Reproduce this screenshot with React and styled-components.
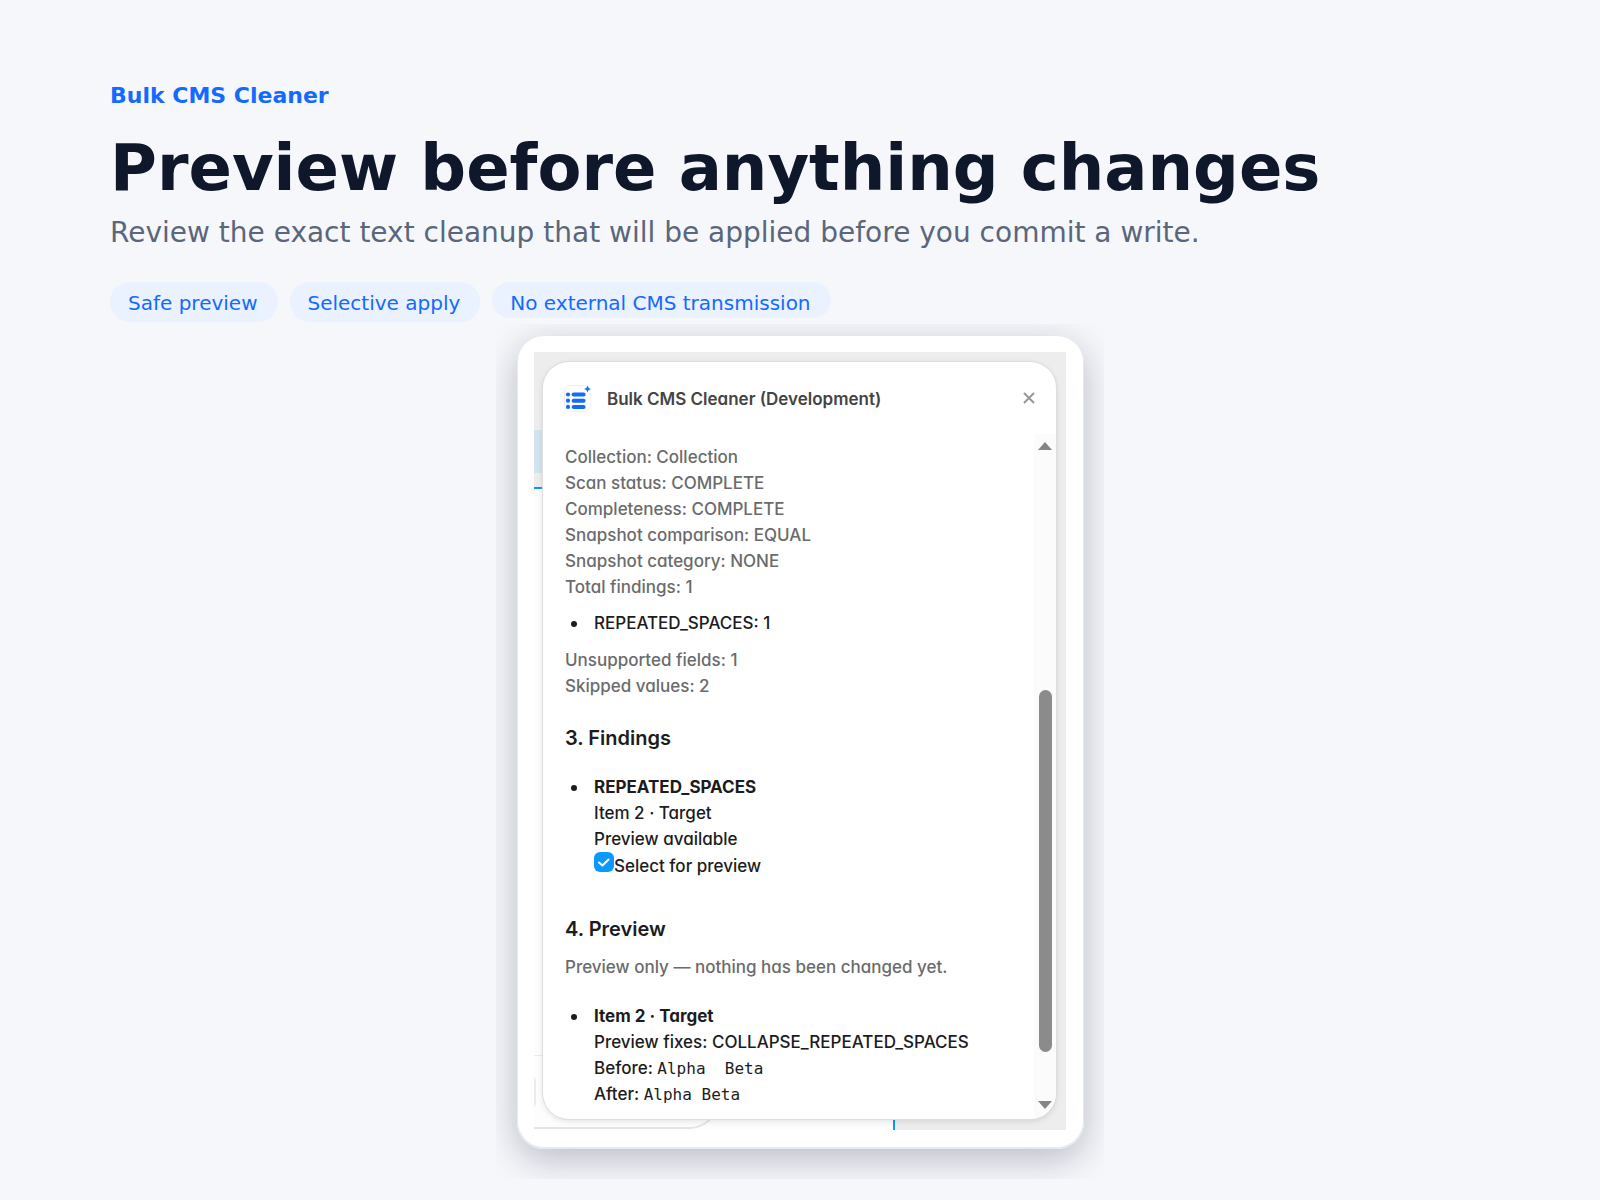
import styled, { createGlobalStyle } from 'styled-components';

const GlobalStyle = createGlobalStyle`
  * {
    box-sizing: border-box;
  }
  body {
    margin: 0;
    background: #f5f7fb;
    font-family: "DejaVu Sans", sans-serif;
  }
  h1, h2, p, ul {
    margin: 0;
    padding: 0;
  }
`;

const Page = styled.main`
  padding: 81px 110px 20px;
`;

const Brand = styled.p`
  font-weight: 700;
  font-size: 22px;
  line-height: 30px;
  color: #146aff;
`;

const Headline = styled.h1`
  margin-top: 19px;
  font-weight: 700;
  font-size: 64px;
  line-height: 76px;
  color: #0f172a;
`;

const Lead = styled.p`
  margin-top: 9px;
  font-size: 28px;
  line-height: 36px;
  color: #5b667a;
`;

const Tags = styled.ul`
  display: flex;
  flex-wrap: wrap;
  align-items: flex-start;
  gap: 12px;
  margin-top: 31px;
  list-style: none;
`;

const Tag = styled.li`
  height: ${({ $short }) => ($short ? '36px' : '40px')};
  padding: 0 20px 0 18px;
  border-radius: 20px;
  background: #eaf1ff;
  font-size: 20px;
  line-height: 42px;
  color: #146aff;
`;

const Stage = styled.div`
  width: 100%;
  max-width: 608px;
  margin: 2px auto 0;
  padding: 12px 20px 30px 21px;
  overflow: hidden;
`;

const Device = styled.div`
  padding: 16px 18px 19px 17px;
  border-radius: 27px;
  background: #fff;
  box-shadow: inset 0 -1px 0 1px #e4e9f5, 0 10px 36px rgba(15, 18, 32, 0.26);
`;

const Screen = styled.div`
  position: relative;
  padding: 10px 10px 11px 9px;
  overflow: hidden;
  background: #ededed;
`;

/* the editor that shows behind the plugin window */
const Canvas = styled.div`
  position: absolute;
  top: 135px;
  bottom: 0;
  left: 0;
  width: 361px;
  border-top: 2px solid #0a99ff;
  border-right: 2px solid #0a99ff;
  background: #fdfdfd;
`;

const Selection = styled.div`
  position: absolute;
  top: 78px;
  left: 0;
  width: 40px;
  height: 43px;
  background: #d0e4ee;
`;

const Toolbar = styled.div`
  position: absolute;
  bottom: 1px;
  left: -40px;
  width: 224px;
  height: 74px;
  border: 2px solid #e4e4e4;
  border-top: 1px solid #ebebeb;
  border-radius: 0 0 28px 0;
`;

const ToolbarButton = styled.div`
  position: absolute;
  bottom: 18px;
  left: 0;
  width: 40px;
  height: 34px;
  border-right: 2px solid #ececec;
  border-radius: 6px;
`;

const Plugin = styled.section`
  position: relative;
  border-radius: 26px;
  overflow: hidden;
  background: #fff;
  box-shadow: 0 0 0 1px #dedede, 0 2px 6px rgba(0, 0, 0, 0.12);
  font-family: Inter, sans-serif;
  font-feature-settings: "cv11";
  font-weight: 500;
  font-size: 17px;
  line-height: 26px;
  color: #1c1c1c;
`;

const PluginHeader = styled.header`
  display: flex;
  align-items: center;
  gap: 15px;
  height: 72px;
  padding: 1px 18px 0 21px;
`;

const PluginTitle = styled.h2`
  flex: 1;
  font-weight: 600;
  font-size: 17px;
  line-height: 26px;
  color: #444;
`;

const CloseButton = styled.button`
  display: flex;
  padding: 0;
  border: 0;
  background: none;
  color: #999;
  cursor: pointer;
`;

const PluginBody = styled.div`
  display: flex;
`;

const Content = styled.div`
  flex: 1;
  padding: 10px 20px 12px 22px;
`;

const Muted = styled.p`
  color: #6b6b6b;
`;

const Note = styled(Muted)`
  margin-top: 12px;
`;

const SectionTitle = styled.h2`
  margin-top: ${({ $gap }) => $gap}px;
  font-weight: 600;
  font-size: 20px;
  line-height: 26px;
`;

const Bullets = styled.ul`
  margin: ${({ $margin }) => $margin};
  list-style: none;
`;

const Bullet = styled.li`
  display: grid;
  grid-template-columns: 23px 1fr;
  padding-left: 6px;
  &::before {
    content: "";
    width: 6px;
    height: 6px;
    margin-top: 11px;
    border-radius: 50%;
    background: #1c1c1c;
  }
`;

const CheckLabel = styled.label`
  display: flex;
  align-items: flex-start;
  line-height: 28px;
  cursor: pointer;
`;

const CheckBox = styled.span`
  display: grid;
  width: 20px;
  height: 20px;
  input, svg {
    grid-area: 1 / 1;
  }
  svg {
    pointer-events: none;
  }
`;

const CheckInput = styled.input`
  appearance: none;
  width: 20px;
  height: 20px;
  margin: 0;
  border-radius: 6px;
  background: #d5d5d5;
  &:checked {
    background: #0a99ff;
  }
`;

const Value = styled.code`
  font-family: "DejaVu Sans Mono", monospace;
  font-weight: 400;
  font-size: 16px;
  line-height: 16px;
  white-space: pre;
`;

const ScrollTrack = styled.div`
  display: flex;
  flex-direction: column;
  align-items: center;
  width: 22px;
  padding: 8px 0 10px;
  background: #fbfbfb;
`;

const ScrollSpace = styled.div`
  flex: ${({ $size }) => $size};
`;

const ScrollThumb = styled.div`
  flex: 361;
  width: 13px;
  border-radius: 7px;
  background: #8b8b8b;
`;

const AppLogo = () => (
  <svg width="28" height="28" viewBox="0 0 28 28" aria-hidden="true">
    <rect x="0.5" y="0.5" width="26" height="26" rx="6" fill="#fff" stroke="#f0f0f2" />
    <g fill="#146aff">
      <circle cx="4" cy="9.5" r="2.1" />
      <circle cx="4" cy="15.7" r="2.1" />
      <circle cx="4" cy="21.9" r="2.1" />
      <rect x="7.6" y="7.5" width="14" height="4" rx="2" />
      <rect x="7.6" y="13.7" width="14" height="4" rx="2" />
      <rect x="7.6" y="19.9" width="14" height="4" rx="2" />
      <path d="M23.5 0.4 L24.6 2.9 L27 4 L24.6 5.1 L23.5 7.6 L22.4 5.1 L20 4 L22.4 2.9 Z" />
    </g>
  </svg>
);

const CloseIcon = () => (
  <svg width="18" height="18" viewBox="0 0 18 18" aria-hidden="true">
    <path d="M4 3 L14 13 M14 3 L4 13" stroke="currentColor" strokeWidth="2" fill="none" />
  </svg>
);

const Arrow = ({ points }) => (
  <svg width="14" height="8" viewBox="0 0 14 8" aria-hidden="true">
    <polygon points={points} fill="#858585" />
  </svg>
);

const scanSummary = [
  'Collection: Collection',
  'Scan status: COMPLETE',
  'Completeness: COMPLETE',
  'Snapshot comparison: EQUAL',
  'Snapshot category: NONE',
  'Total findings: 1',
];

const App = () => {
  return (
    <>
      <GlobalStyle />
      <Page>
        <Brand>Bulk CMS Cleaner</Brand>
        <Headline>Preview before anything changes</Headline>
        <Lead>Review the exact text cleanup that will be applied before you commit a write.</Lead>
        <Tags>
          <Tag>Safe preview</Tag>
          <Tag>Selective apply</Tag>
          <Tag $short>No external CMS transmission</Tag>
        </Tags>
        <Stage>
          <Device>
            <Screen>
              <Selection />
              <Canvas>
                <Toolbar>
                  <ToolbarButton />
                </Toolbar>
              </Canvas>
              <Plugin>
                <PluginHeader>
                  <AppLogo />
                  <PluginTitle>Bulk CMS Cleaner (Development)</PluginTitle>
                  <CloseButton type="button" aria-label="Close">
                    <CloseIcon />
                  </CloseButton>
                </PluginHeader>
                <PluginBody>
                  <Content>
                    {scanSummary.map((line) => (
                      <Muted key={line}>{line}</Muted>
                    ))}
                    <Bullets $margin="10px 0 11px">
                      <Bullet>REPEATED_SPACES: 1</Bullet>
                    </Bullets>
                    <Muted>Unsupported fields: 1</Muted>
                    <Muted>Skipped values: 2</Muted>

                    <SectionTitle $gap={26}>3. Findings</SectionTitle>
                    <Bullets $margin="23px 0 0">
                      <Bullet>
                        <div>
                          <strong>REPEATED_SPACES</strong>
                          <div>Item 2 · Target</div>
                          <div>Preview available</div>
                          <CheckLabel>
                            <CheckBox>
                              <CheckInput type="checkbox" defaultChecked />
                              <svg width="20" height="20" viewBox="0 0 20 20" aria-hidden="true">
                                <path
                                  d="M5 10.5 L8.5 13.5 L14.5 7.5"
                                  fill="none"
                                  stroke="#fff"
                                  strokeWidth="2"
                                  strokeLinecap="round"
                                  strokeLinejoin="round"
                                />
                              </svg>
                            </CheckBox>
                            Select for preview
                          </CheckLabel>
                        </div>
                      </Bullet>
                    </Bullets>

                    <SectionTitle $gap={36}>4. Preview</SectionTitle>
                    <Note>Preview only — nothing has been changed yet.</Note>
                    <Bullets $margin="23px 0 0">
                      <Bullet>
                        <div>
                          <strong>Item 2 · Target</strong>
                          <div>Preview fixes: COLLAPSE_REPEATED_SPACES</div>
                          <div>
                            Before: <Value>{'Alpha  Beta'}</Value>
                          </div>
                          <div>
                            After: <Value>Alpha Beta</Value>
                          </div>
                        </div>
                      </Bullet>
                    </Bullets>
                  </Content>
                  <ScrollTrack>
                    <Arrow points="0,8 7,0 14,8" />
                    <ScrollSpace $size={240} />
                    <ScrollThumb />
                    <ScrollSpace $size={49} />
                    <Arrow points="0,0 7,8 14,0" />
                  </ScrollTrack>
                </PluginBody>
              </Plugin>
            </Screen>
          </Device>
        </Stage>
      </Page>
    </>
  );
};

export default App;
